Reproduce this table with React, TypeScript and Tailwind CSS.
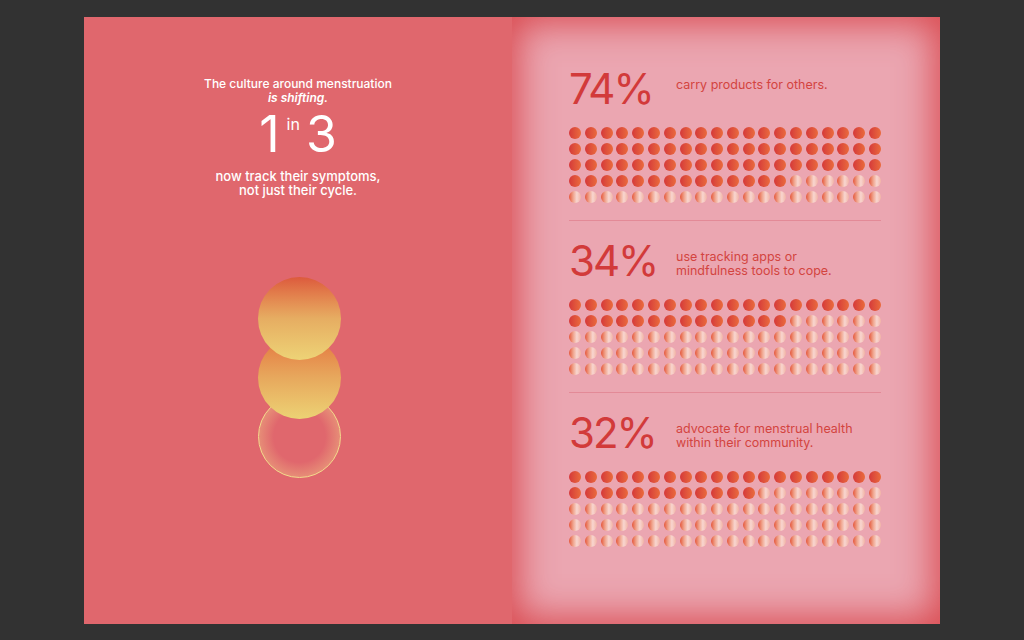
const FONT = { fontFamily: 'Inter, "Noto Sans", sans-serif' };

const STATS = [
  { value: '74%', lines: ['carry products for others.'], filled: 74 },
  { value: '34%', lines: ['use tracking apps or', 'mindfulness tools to cope.'], filled: 34 },
  { value: '32%', lines: ['advocate for menstrual health', 'within their community.'], filled: 32 },
];

function DotGrid({ filled }: { filled: number }) {
  return (
    <div className="grid grid-cols-20 gap-x-[3.8px] gap-y-[4px] w-[312px]">
      {Array.from({ length: 100 }).map((_, i) =>
        i < filled ? (
          <span
            key={i}
            className="block w-3 h-3 rounded-full bg-gradient-to-r from-[#d5383a] to-[#ea6a3c]"
          />
        ) : (
          <span
            key={i}
            className="block w-3 h-3 rounded-full bg-[linear-gradient(90deg,#e5573a_0%,#f0a58e_35%,#f8d6d0_65%,#f2b3a5_100%)]"
          />
        )
      )}
    </div>
  );
}

function StatBlock({ stat, last }: { stat: (typeof STATS)[number]; last: boolean }) {
  return (
    <div className={last ? 'pt-[18px] w-[312px]' : 'pt-[18px] pb-[17px] w-[312px] border-b border-[#e38a97]'}>
      <div className="flex">
        <div className="w-[107px] text-[42px] leading-[44px] h-[44px] text-[#d23a3a] tracking-[-2px]">
          {stat.value}
        </div>
        <div className="pt-[11px] text-[12.5px] leading-[13.5px] text-[#d3443f]">
          {stat.lines.map(l => (
            <div key={l}>{l}</div>
          ))}
        </div>
      </div>
      <div className="mt-[16px]">
        <DotGrid filled={stat.filled} />
      </div>
    </div>
  );
}

export default function App() {
  return (
    <div className="w-full h-[640px] bg-[#323232] flex justify-center pt-[17px]" style={FONT}>
      {/* Left page */}
      <div className="w-[428px] h-[607px] bg-[#e0676d] flex flex-col items-center pt-[60px] text-white">
        <div className="text-[12px] leading-[14px] font-medium text-center">
          <div>The culture around menstruation</div>
          <div className="italic font-semibold">is shifting.</div>
        </div>
        <div className="flex items-start mt-[4px] h-[50px]">
          <span className="text-[50px] leading-[50px] tracking-[1px]">1</span>
          <span className="text-[16px] leading-[16px] mx-[6px] mt-[7px]">in</span>
          <span className="text-[50px] leading-[50px]">3</span>
        </div>
        <div className="text-[13px] leading-[14px] font-medium text-center mt-[10px]">
          <div>now track their symptoms,</div>
          <div>not just their cycle.</div>
        </div>

        <div className="flex flex-col items-center mt-[80px] ml-[2px]">
          <div className="relative z-30 w-[83px] h-[83px] rounded-full bg-gradient-to-b from-[#dc5a3d] via-[#e6ad62] to-[#edd376]" />
          <div className="relative z-20 -mt-[24px] w-[83px] h-[83px] rounded-full bg-gradient-to-b from-[#e3743f] via-[#e7a85d] to-[#ecd274]" />
          <div className="relative z-10 -mt-[24px] w-[83px] h-[83px] rounded-full border border-[#f3da8c] bg-[radial-gradient(circle,rgba(224,103,110,0)_45%,rgba(238,185,130,0.6)_78%,rgba(246,222,142,1)_100%)]" />
        </div>
      </div>

      {/* Right page */}
      <div className="w-[428px] h-[607px] bg-[#eba6b1] shadow-[inset_0_0_36px_6px_rgba(214,58,62,0.85)] pl-[57px] pt-[32px]">
        {STATS.map((s, i) => (
          <StatBlock key={s.value} stat={s} last={i === STATS.length - 1} />
        ))}
      </div>
    </div>
  );
}
